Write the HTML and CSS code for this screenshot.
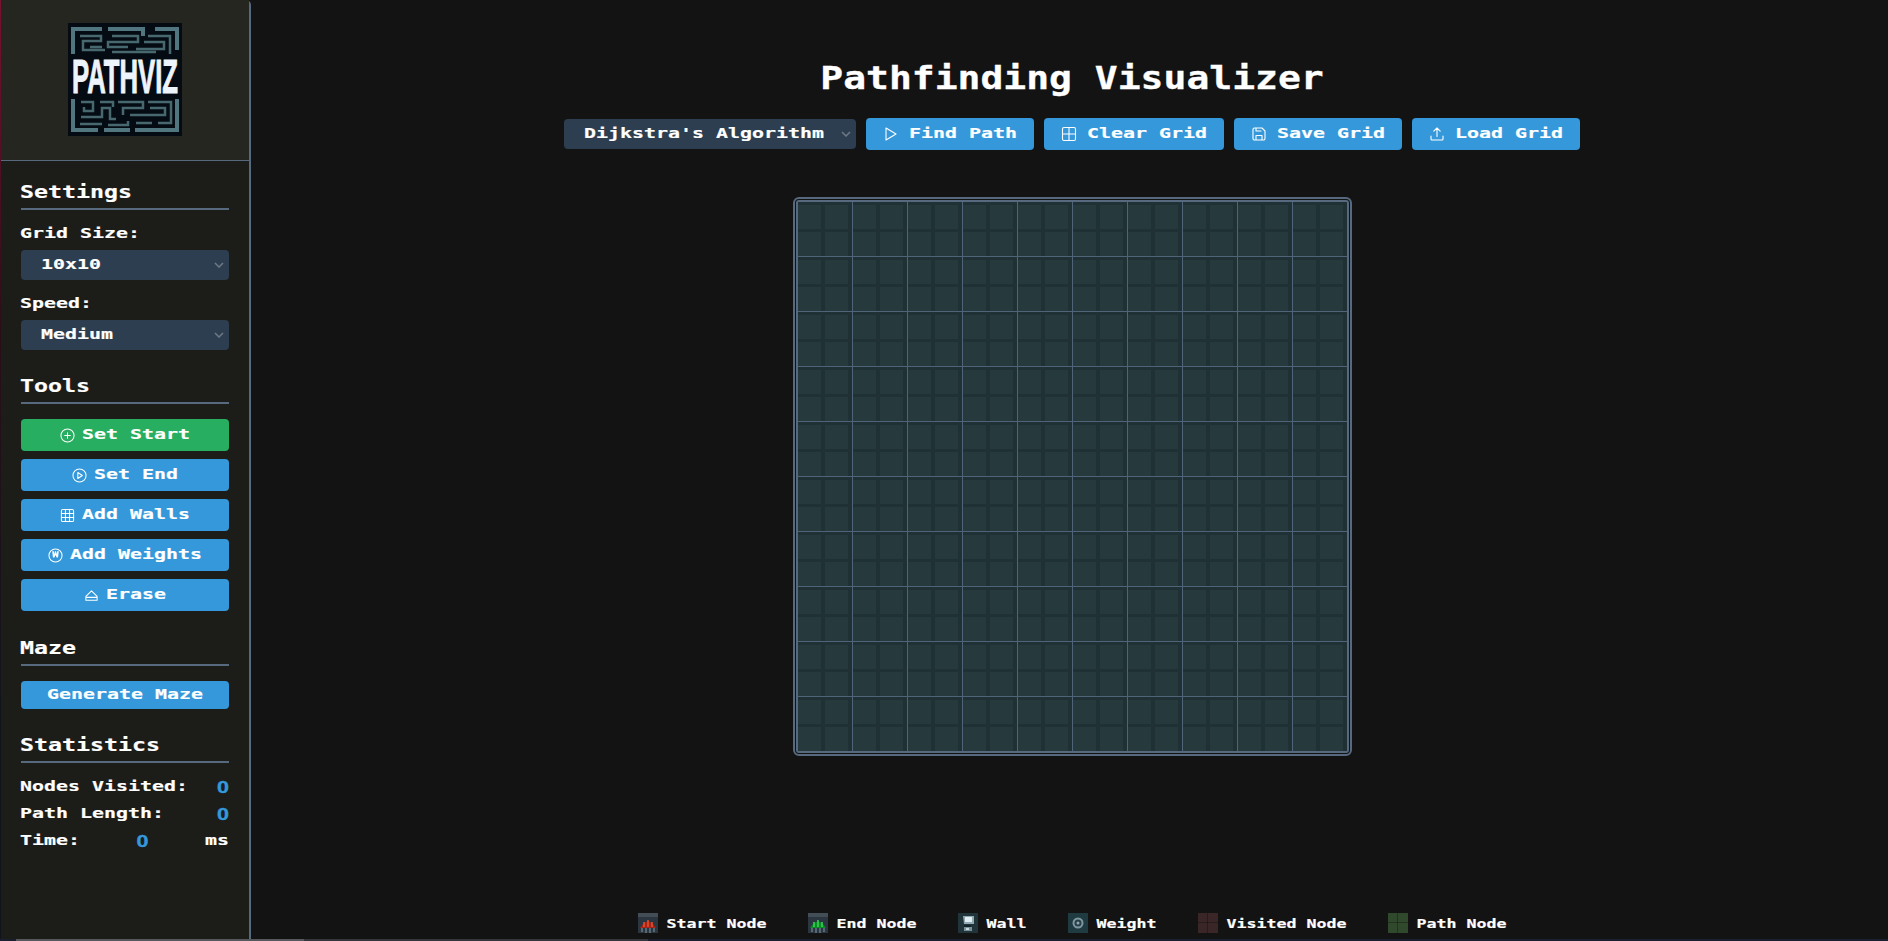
FILE: index.html
```html
<!DOCTYPE html>
<html lang="en">
<head>
<meta charset="utf-8">
<title>Pathfinding Visualizer</title>
<link rel="stylesheet" href="styles.css">
</head>
<body>
<div class="app">
  <aside class="sidebar">
    <div class="logo-box">
      <svg class="logo" viewBox="0 0 114 113" width="114" height="113">
        <rect width="114" height="113" fill="#050b12"/>
        <g fill="none" stroke="#527680" stroke-width="4">
          <path d="M34 6H5V31M40 6H75V13M87 6H109V27"/>
          <path d="M5 76V107H30M36 107H62M67 107H109V76"/>
        </g>
        <g fill="none" stroke="#47686f" stroke-width="2.500">
          <path d="M12 13H33V18H15V27H37M44 13H70V19H40V24H60M80 13H102V31M76 19H96V26H68M22 24H34M44 29H88"/>
          <path d="M13 79H25V88H16V84M32 79H45V84M50 79H75V85H55V92M80 79H103V100H90M82 85H97V92H62M13 94H34V85H42V96H48M12 101H34M40 102H60V98M68 100H84"/>
        </g>
        <text class="logo-text" transform="scale(1 2.100)" x="4" y="33.500" textLength="106" lengthAdjust="spacingAndGlyphs">PATHVIZ</text>
      </svg>
    </div>
    <div class="side-body">
      <section class="side-section settings">
        <h2 class="side-title"><span class="t">Settings</span></h2>
        <div class="field-label"><span class="t">Grid Size:</span></div>
        <div class="select side-select"><span class="t">10x10</span><svg class="chev" viewBox="0 0 10 6"><path d="M1 1l4 4 4-4"/></svg></div>
        <div class="field-label"><span class="t">Speed:</span></div>
        <div class="select side-select"><span class="t">Medium</span><svg class="chev" viewBox="0 0 10 6"><path d="M1 1l4 4 4-4"/></svg></div>
      </section>
      <section class="side-section tools">
        <h2 class="side-title"><span class="t">Tools</span></h2>
        <div class="tool-list">
          <button class="btn btn-green">
            <svg class="icon" viewBox="0 0 16 16"><circle cx="8" cy="8" r="7"/><path d="M8 5v6M5 8h6"/></svg><span class="t">Set Start</span>
          </button>
          <button class="btn">
            <svg class="icon" viewBox="0 0 16 16"><circle cx="8" cy="8" r="7"/><path d="M6.200 4.800v6.400L11 8z"/></svg><span class="t">Set End</span>
          </button>
          <button class="btn">
            <svg class="icon" viewBox="0 0 16 16"><rect x="1.500" y="1.500" width="13" height="13" rx="1.500"/><path d="M5.800 1.500v13M10.200 1.500v13M1.500 5.800h13M1.500 10.200h13"/></svg><span class="t">Add Walls</span>
          </button>
          <button class="btn">
            <svg class="icon" viewBox="0 0 16 16"><circle cx="8" cy="8" r="7"/><path class="icon-fill" d="M4.500 3.500h1.800l.3 3.500.8-3.500h1.200l.8 3.500.3-3.500h1.800l-.8 6.500H9.200L8 7.500 6.800 10H5.300z"/></svg><span class="t">Add Weights</span>
          </button>
          <button class="btn">
            <svg class="icon" viewBox="0 0 16 16"><path d="M8 3l6 6v4H2V9zM2 10h12"/></svg><span class="t">Erase</span>
          </button>
        </div>
      </section>
      <section class="side-section maze">
        <h2 class="side-title"><span class="t">Maze</span></h2>
        <button class="btn btn-maze"><span class="t">Generate Maze</span></button>
      </section>
      <section class="side-section stats">
        <h2 class="side-title"><span class="t">Statistics</span></h2>
        <div class="stat"><span class="t">Nodes Visited:</span><span class="t stat-value">0</span></div>
        <div class="stat"><span class="t">Path Length:</span><span class="t stat-value">0</span></div>
        <div class="stat"><span class="t">Time:</span><span class="t stat-value">0</span><span class="t">ms</span></div>
      </section>
    </div>
  </aside>
  <main class="main">
    <h1 class="title"><span class="t">Pathfinding Visualizer</span></h1>
    <div class="toolbar">
      <div class="select algo-select"><span class="t">Dijkstra's Algorithm</span><svg class="chev" viewBox="0 0 10 6"><path d="M1 1l4 4 4-4"/></svg></div>
      <button class="btn btn-top">
        <svg class="icon" viewBox="0 0 16 16"><path d="M3 2v12L13 8z"/></svg><span class="t">Find Path</span>
      </button>
      <button class="btn btn-top">
        <svg class="icon" viewBox="0 0 16 16"><rect x="1.500" y="1.500" width="13" height="13" rx="1.500"/><path d="M8 1.500v13M1.500 8h13"/></svg><span class="t">Clear Grid</span>
      </button>
      <button class="btn btn-top">
        <svg class="icon" viewBox="0 0 16 16"><path d="M3.500 2H11l3 3v7.500a1.500 1.500 0 0 1-1.500 1.500h-9A1.500 1.500 0 0 1 2 12.500v-9A1.500 1.500 0 0 1 3.500 2zM5 14V9.500h6V14M5 2v3h5"/></svg><span class="t">Save Grid</span>
      </button>
      <button class="btn btn-top">
        <svg class="icon" viewBox="0 0 16 16"><path d="M2 10v3a1 1 0 0 0 1 1h10a1 1 0 0 0 1-1v-3M8 10.500V2M4.800 5.200L8 2l3.200 3.200"/></svg><span class="t">Load Grid</span>
      </button>
    </div>
    <div class="board">
      <div class="grid" id="grid"></div>
    </div>
    <div class="legend">
      <div class="legend-item">
        <svg class="legend-icon" viewBox="0 0 20 20"><rect width="20" height="20" fill="#2c3640"/><rect width="20" height="4" fill="#424d56"/><path d="M2 15q8-13 16 0z" fill="#a8241a"/><path d="M6 9v5M10 7v7M14 9v5" stroke="#e8502c" stroke-width="1.500"/><path d="M4 15v4M8 15v5M12 15v5M16 15v4" stroke="#7f9aa8"/></svg>
        <span class="t">Start Node</span>
      </div>
      <div class="legend-item">
        <svg class="legend-icon" viewBox="0 0 20 20"><rect width="20" height="20" fill="#2c3640"/><rect width="20" height="4" fill="#424d56"/><path d="M2 15q8-13 16 0z" fill="#0c8a26"/><path d="M6 9v5M10 7v7M14 9v5" stroke="#38d854" stroke-width="1.500"/><path d="M4 15v4M8 15v5M12 15v5M16 15v4" stroke="#7f9aa8"/></svg>
        <span class="t">End Node</span>
      </div>
      <div class="legend-item">
        <svg class="legend-icon" viewBox="0 0 20 20"><rect width="20" height="20" fill="#20343a"/><path d="M5 3h11v8H6z" fill="#8fa9b4"/><path d="M7 4h7v5H7z" fill="#e2edf2"/><path d="M6 12h7v2H6z" fill="#14242a"/><path d="M6 14h8v4H6z" fill="#76909a"/><path d="M8 15h3v2H8z" fill="#c8d6dc"/></svg>
        <span class="t">Wall</span>
      </div>
      <div class="legend-item">
        <svg class="legend-icon" viewBox="0 0 20 20"><rect width="20" height="20" fill="#1f3a40"/><circle cx="10" cy="10" r="5.500" fill="#7d98a3"/><circle cx="10" cy="10" r="3.500" fill="#2a3e46"/><circle cx="10" cy="10" r="1.500" fill="#8fa8b2"/></svg>
        <span class="t">Weight</span>
      </div>
      <div class="legend-item">
        <span class="swatch swatch-visited"></span>
        <span class="t">Visited Node</span>
      </div>
      <div class="legend-item">
        <span class="swatch swatch-path"></span>
        <span class="t">Path Node</span>
      </div>
    </div>
  </main>
</div>
<div class="page-strip"></div>
<script src="grid.js"></script>
</body>
</html>
```

FILE: grid.js
```js
var grid = document.getElementById('grid');
for (var i = 0; i < 100; i++) {
  var cell = document.createElement('div');
  cell.className = 'cell';
  grid.appendChild(cell);
}
```

FILE: styles.css
```css
* { box-sizing: border-box; }
html, body { margin: 0; height: 100%; overflow: hidden; }
body {
  background: #131313;
  color: #fff;
  font-family: "DejaVu Sans Mono", "Liberation Mono", monospace;
  font-weight: 700;
  font-size: 19.930px;
}
.t {
  display: inline-block;
  transform: scaleY(.68);
  white-space: nowrap;
  -webkit-text-stroke: .25px currentColor;
}
.app { display: flex; height: 941px; }
.sidebar {
  width: 251px;
  flex: none;
  height: 939px;
  background:
    linear-gradient(#7a1030, #2a0e18 35%, #12141c 75%) 0 0 / 1px 100% no-repeat,
    #1c1c19;
  border-right: 2px solid #56697f;
  border-top-right-radius: 5px;
  display: flex;
  flex-direction: column;
}
.logo-box {
  height: 161px;
  flex: none;
  margin-left: 1px;
  background: #262621;
  border-bottom: 1px solid #56697f;
  padding: 23px 0 0 67px;
}
.logo { display: block; }
.logo-text {
  font-family: "Liberation Sans", sans-serif;
  font-weight: 700;
  font-size: 23px;
  fill: #eef4fb;
  stroke: #eef4fb;
  stroke-width: .5;
}
.side-body { padding: 0 20px 0 21px; }
.side-section { display: flex; flex-direction: column; }
.settings { padding-top: 20px; }
.tools { padding-top: 25px; }
.maze { padding-top: 26px; }
.stats { padding-top: 25px; }
.side-title {
  margin: 0 0 15px;
  font-size: 23.250px;
  line-height: 21px;
  font-weight: 700;
  border-bottom: 2px solid #56697f;
  height: 29px;
}
.side-title .t { transform: scaleY(.74); margin-left: -1px; }
.field-label { line-height: 17px; margin: 0 0 8px -1px; }
.select {
  color: #fff;
  background-color: #2c3e50;
  border-radius: 4px;
  height: 30px;
  line-height: 30px;
  display: flex;
  align-items: center;
  padding-left: 20px;
  position: relative;
}
.chev {
  position: absolute;
  right: 5px;
  top: 12px;
  width: 10px;
  height: 6px;
  fill: none;
  stroke: #6f7986;
  stroke-width: 1.500;
}
.side-select { width: 208px; margin-bottom: 15px; }
.side-select:last-child { margin-bottom: 0; }
.btn {
  font: inherit;
  color: #fff;
  background: #3498db;
  border: 0;
  border-radius: 4px;
  height: 32px;
  padding: 0;
  display: flex;
  align-items: center;
  justify-content: center;
  gap: 7px;
}
.btn .t { margin-bottom: 2px; }
.btn-green { background: #27ae60; }
.tool-list { display: flex; flex-direction: column; gap: 8px; }
.btn-maze { height: 28px; }
.icon {
  width: 15px;
  height: 15px;
  flex: none;
  fill: none;
  stroke: #fff;
  stroke-width: 1.100;
  stroke-linejoin: round;
  stroke-linecap: round;
}
.icon-fill { fill: #fff; stroke: none; }
.stat {
  display: flex;
  justify-content: space-between;
  line-height: 18px;
  margin-bottom: 9px;
  margin-left: -1px;
}
.stat-value {
  color: #3498db;
  font-family: "Liberation Sans", sans-serif;
  font-size: 21.500px;
  transform: scaleY(.8);
  -webkit-text-stroke: .5px currentColor;
}
.main {
  flex: 1;
  min-width: 0;
  padding-left: 5px;
  display: flex;
  flex-direction: column;
  align-items: center;
}
.title {
  margin: 58px 0 0;
  font-size: 38px;
  line-height: 40px;
  font-weight: 700;
}
.title .t { transform: scaleY(.83); -webkit-text-stroke: .4px currentColor; }
.toolbar {
  margin-top: 20px;
  display: flex;
  align-items: center;
  gap: 10px;
}
.algo-select { width: 292px; }
.btn-top { padding: 0 17px; gap: 10px; }
.btn-top .icon { width: 16px; height: 16px; }
.board {
  margin: 47px 0 0 1px;
  width: 559px;
  height: 559px;
  border: 2px solid #56697f;
  border-radius: 6px;
  padding: 1px;
  flex: none;
}
.grid {
  width: 553px;
  height: 553px;
  border: 2px solid #56697f;
  border-radius: 3px;
  overflow: hidden;
  display: grid;
  grid-template-columns: repeat(10, 55px);
  grid-template-rows: repeat(10, 55px);
}
.cell {
  background-color: #263a3e;
  background-image:
    linear-gradient(to right, transparent 23px, #203135 23px),
    linear-gradient(to bottom, #203135 3px, transparent 3px);
  background-size: 27px 27px;
  border-right: 1px solid #4f6379;
  border-bottom: 1px solid #4f6379;
}
.legend {
  margin-top: auto;
  margin-bottom: 7px;
  display: flex;
  gap: 41px;
  font-size: 16.610px;
  line-height: 20px;
}
.legend .t { transform: scaleY(.72); margin-top: 2px; }
.legend-item { display: flex; align-items: center; gap: 9px; }
.legend-icon { width: 20px; height: 20px; flex: none; display: block; }
.swatch {
  width: 20px;
  height: 20px;
  flex: none;
  background-image:
    linear-gradient(to right, transparent 9px, rgba(0,0,0,.3) 9px, rgba(0,0,0,.3) 10px, transparent 10px),
    linear-gradient(to bottom, transparent 9px, rgba(0,0,0,.3) 9px, rgba(0,0,0,.3) 10px, transparent 10px);
}
.swatch-visited { background-color: #3a2626; }
.swatch-path { background-color: #30482b; }
.page-strip {
  position: fixed;
  left: 0;
  right: 0;
  bottom: 0;
  height: 2px;
  background: linear-gradient(to right, #1a2030 16px, #55585c 16px, #55585c 304px, #33363a 304px, #33363a 648px, #1a2030 648px);
}
```
